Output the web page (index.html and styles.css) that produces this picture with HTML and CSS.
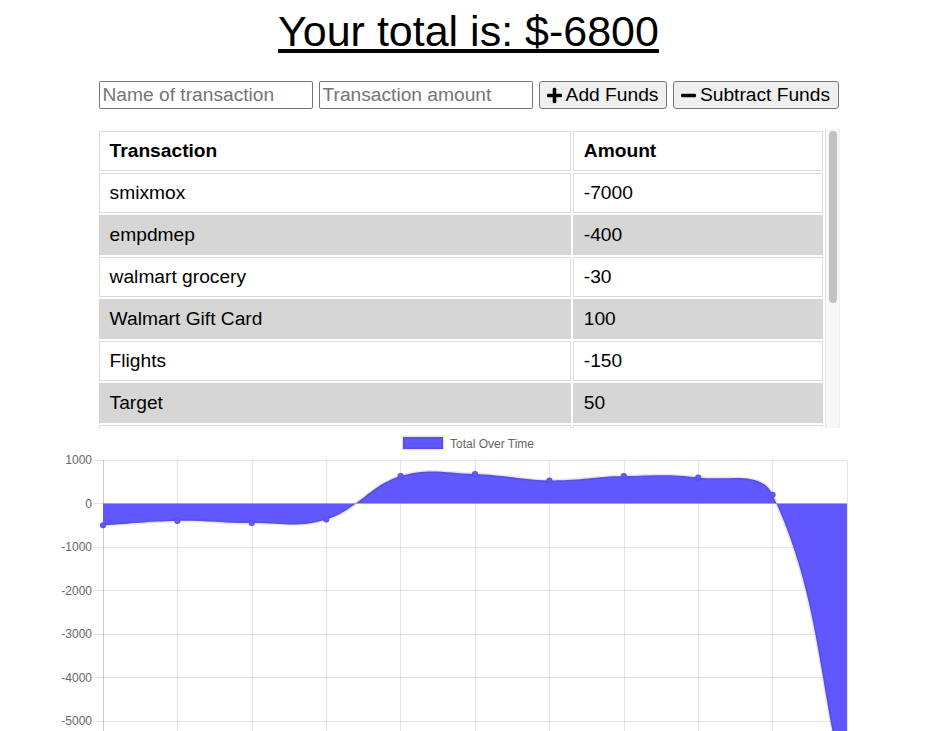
FILE: index.html
```html
<!DOCTYPE html>
<html lang="en">
<head>
<meta charset="utf-8">
<title>Budget Tracker</title>
<link rel="stylesheet" href="styles.css">
</head>
<body>
<div class="page">
  <h1 class="total">Your total is: $<span id="total">-6800</span></h1>

  <form class="entry">
    <input class="field" type="text" placeholder="Name of transaction">
    <input class="field" type="text" placeholder="Transaction amount">
    <button type="button" class="btn btn-add">
      <svg class="icon" width="15" height="17" viewBox="0 0 448 512"><path d="M416 208H272V64c0-17.67-14.33-32-32-32h-32c-17.67 0-32 14.33-32 32v144H32c-17.67 0-32 14.33-32 32v32c0 17.67 14.33 32 32 32h144v144c0 17.67 14.33 32 32 32h32c17.67 0 32-14.33 32-32V304h144c17.67 0 32-14.33 32-32v-32c0-17.67-14.33-32-32-32z"/></svg>
      <span>Add Funds</span>
    </button>
    <button type="button" class="btn btn-sub">
      <svg class="icon" width="15" height="17" viewBox="0 0 448 512"><path d="M416 208H32c-17.67 0-32 14.33-32 32v32c0 17.67 14.33 32 32 32h384c17.67 0 32-14.33 32-32v-32c0-17.67-14.33-32-32-32z"/></svg>
      <span>Subtract Funds</span>
    </button>
  </form>

  <div class="table-box">
    <div class="table-view">
      <table class="tx">
        <colgroup><col class="col-name"><col class="col-amt"></colgroup>
        <thead>
          <tr><th>Transaction</th><th>Amount</th></tr>
        </thead>
        <tbody>
          <tr><td>smixmox</td><td>-7000</td></tr>
          <tr><td>empdmep</td><td>-400</td></tr>
          <tr><td>walmart grocery</td><td>-30</td></tr>
          <tr><td>Walmart Gift Card</td><td>100</td></tr>
          <tr><td>Flights</td><td>-150</td></tr>
          <tr><td>Target</td><td>50</td></tr>
          <tr class="peek"><td></td><td></td></tr>
        </tbody>
      </table>
    </div>
    <div class="scrollbar"><div class="thumb"></div></div>
  </div>

  <div class="chart">
    <svg class="chart-svg" width="937" height="303" viewBox="0 428 937 303">
      <g class="grid">
        <line x1="93" y1="460.5" x2="847" y2="460.5"/>
        <line x1="93" y1="503.5" x2="847" y2="503.5"/>
        <line x1="93" y1="547.5" x2="847" y2="547.5"/>
        <line x1="93" y1="590.5" x2="847" y2="590.5"/>
        <line x1="93" y1="634.5" x2="847" y2="634.5"/>
        <line x1="93" y1="677.5" x2="847" y2="677.5"/>
        <line x1="93" y1="721.5" x2="847" y2="721.5"/>
        <line x1="93" y1="764.5" x2="847" y2="764.5"/>
        <line x1="103.5" y1="460" x2="103.5" y2="818"/>
        <line x1="103.5" y1="460" x2="103.5" y2="818"/>
        <line x1="177.5" y1="460" x2="177.5" y2="818"/>
        <line x1="252.5" y1="460" x2="252.5" y2="818"/>
        <line x1="326.5" y1="460" x2="326.5" y2="818"/>
        <line x1="400.5" y1="460" x2="400.5" y2="818"/>
        <line x1="475.5" y1="460" x2="475.5" y2="818"/>
        <line x1="549.5" y1="460" x2="549.5" y2="818"/>
        <line x1="624.5" y1="460" x2="624.5" y2="818"/>
        <line x1="698.5" y1="460" x2="698.5" y2="818"/>
        <line x1="772.5" y1="460" x2="772.5" y2="818"/>
        <line x1="847.5" y1="460" x2="847.5" y2="818"/>
      </g>
      <g class="ylabels">
        <text x="92" y="464">1000</text>
        <text x="92" y="507.5">0</text>
        <text x="92" y="551">-1000</text>
        <text x="92" y="594.5">-2000</text>
        <text x="92" y="638">-3000</text>
        <text x="92" y="681.5">-4000</text>
        <text x="92" y="725">-5000</text>
      </g>
      <path id="area" class="area" d=""/>
      <path id="line" class="line" d=""/>
      <g id="points" class="points"></g>
      <rect class="legend-box" x="403" y="437" width="40" height="12"/>
      <text class="legend-text" x="450" y="447.5">Total Over Time</text>
    </svg>
  </div>
</div>
<script src="script.js"></script>
</body>
</html>
```

FILE: styles.css
```css
html {
  overflow: hidden;
}

body {
  margin: 0;
  background: #ffffff;
  font-family: "Liberation Sans", Arial, Helvetica, sans-serif;
  color: #000000;
}

.page {
  width: 937px;
}

.total {
  margin: 7px 0 0;
  font-size: 43px;
  line-height: 48px;
  font-weight: normal;
  text-align: center;
  text-decoration: underline;
}

.entry {
  width: 740px;
  margin: 26px auto 0;
  display: flex;
  gap: 6px;
  height: 28px;
}

.field {
  box-sizing: border-box;
  width: 214px;
  height: 28px;
  margin: 0;
  padding: 0 3px;
  border: 1px solid #767676;
  border-radius: 2px;
  font-family: "Liberation Sans", Arial, sans-serif;
  font-size: 19.2px;
  color: #000;
  background: #fff;
}

.field::placeholder {
  color: #757575;
}

.btn {
  box-sizing: border-box;
  height: 28px;
  margin: 0;
  padding: 0;
  display: inline-flex;
  align-items: center;
  justify-content: center;
  gap: 4px;
  border: 1px solid #767676;
  border-radius: 3px;
  background: #efefef;
  font-family: "Liberation Sans", Arial, sans-serif;
  font-size: 19.2px;
  color: #000;
}

.btn-add {
  width: 128px;
}

.btn-sub {
  width: 166px;
}

.icon {
  fill: #000;
  stroke: #000;
  stroke-width: 12;
  stroke-linejoin: round;
  display: block;
}

.table-box {
  width: 743px;
  height: 299px;
  margin: 20px auto 0;
  display: flex;
}

.table-view {
  flex: 1;
  overflow: hidden;
}

.scrollbar {
  box-sizing: border-box;
  width: 15px;
  flex: none;
  padding: 2px 3px 0 3px;
  background: #f7f7f7;
  border-left: 1px solid #e6e6e6;
  border-right: 1px solid #f0f0f0;
}

.thumb {
  width: 8px;
  height: 172px;
  border-radius: 4px;
  background: #c1c1c1;
}

.tx {
  width: 100%;
  table-layout: fixed;
  border-collapse: separate;
  border-spacing: 2px;
  font-size: 19.2px;
}

.col-name {
  width: 65.4%;
}

.tx th,
.tx td {
  padding: 8px 9.6px;
  line-height: 22px;
  border: 1px solid #dcdcdc;
  text-align: left;
  background: #ffffff;
}

.tx th {
  font-weight: bold;
}

.tx tbody tr:nth-child(even) td {
  background: #d6d6d6;
  border-color: #d6d6d6;
}

.tx .peek td {
  height: 22px;
}

.chart {
  height: 303px;
}

.chart-svg {
  display: block;
}

.grid line {
  stroke: rgba(0, 0, 0, 0.1);
  stroke-width: 1;
}

.ylabels text {
  font-family: "Liberation Sans", Arial, sans-serif;
  font-size: 12px;
  fill: #666666;
  text-anchor: end;
}

.area {
  fill: #6157fe;
}

.line {
  fill: none;
  stroke: rgba(0, 0, 0, 0.1);
  stroke-width: 3;
}

.points circle {
  fill: #6157fe;
  stroke: rgba(0, 0, 0, 0.1);
  stroke-width: 1;
}

.legend-box {
  fill: #6157fe;
  stroke: rgba(0, 0, 0, 0.1);
  stroke-width: 3;
}

.legend-text {
  font-family: "Liberation Sans", Arial, sans-serif;
  font-size: 12px;
  fill: #666666;
}
```

FILE: script.js
```js
(function () {
  var values = [-500, -400, -450, -370, 630, 680, 530, 630, 600, 200, -6800];
  var left = 103, right = 847, top = 460, bottom = 808;
  var step = (right - left) / (values.length - 1);
  var zeroY = 503.5;
  var scale = 0.0435;
  var pts = values.map(function (v, i) {
    return { x: left + step * i, y: zeroY - v * scale };
  });
  var t = 0.4;
  function cap(p) {
    return {
      x: Math.min(Math.max(p.x, left), right),
      y: Math.min(Math.max(p.y, top), bottom)
    };
  }
  var cps = pts.map(function (p, i) {
    var prev = pts[i - 1] || p;
    var next = pts[i + 1] || p;
    var d01 = Math.hypot(p.x - prev.x, p.y - prev.y);
    var d12 = Math.hypot(next.x - p.x, next.y - p.y);
    var s01 = d01 / (d01 + d12);
    var s12 = d12 / (d01 + d12);
    if (isNaN(s01)) s01 = 0;
    if (isNaN(s12)) s12 = 0;
    var fa = t * s01, fb = t * s12;
    return {
      c1: cap({ x: p.x - fa * (next.x - prev.x), y: p.y - fa * (next.y - prev.y) }),
      c2: cap({ x: p.x + fb * (next.x - prev.x), y: p.y + fb * (next.y - prev.y) })
    };
  });
  var d = "M" + pts[0].x + " " + pts[0].y;
  for (var i = 1; i < pts.length; i++) {
    var a = cps[i - 1].c2, b = cps[i].c1, p = pts[i];
    d += " C" + a.x + " " + a.y + " " + b.x + " " + b.y + " " + p.x + " " + p.y;
  }
  document.getElementById("line").setAttribute("d", d);
  document.getElementById("area").setAttribute(
    "d",
    d + " L" + pts[pts.length - 1].x + " " + zeroY + " L" + pts[0].x + " " + zeroY + " Z"
  );
  var g = document.getElementById("points");
  var ns = "http://www.w3.org/2000/svg";
  pts.forEach(function (p) {
    var c = document.createElementNS(ns, "circle");
    c.setAttribute("cx", p.x);
    c.setAttribute("cy", p.y);
    c.setAttribute("r", 3);
    g.appendChild(c);
  });
})();
```
